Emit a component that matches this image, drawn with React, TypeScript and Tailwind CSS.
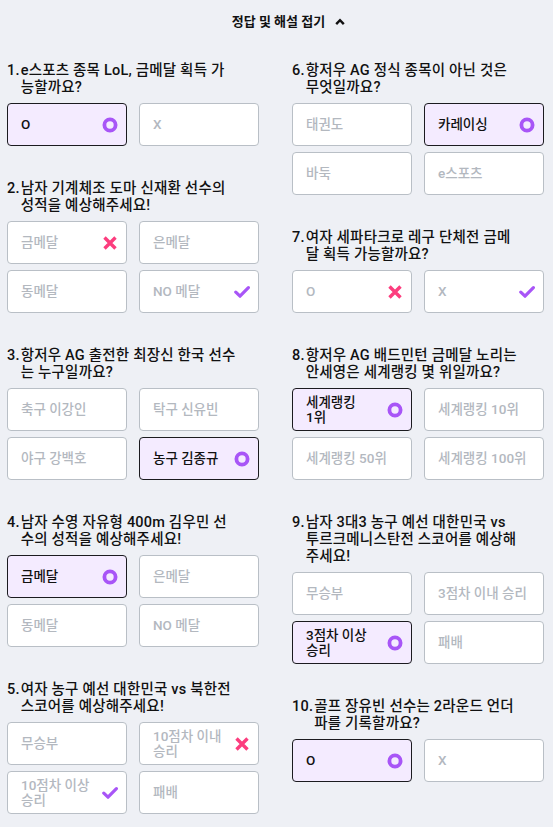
type Mark = "ring" | "x" | "check" | null;

type Option = {
    lines: string[];
    selected?: boolean;
    mark?: Mark;
};

type Question = {
    no: number;
    title: string[];
    options: Option[];
};

const leftQuestions: Question[] = [
    {
        no: 1,
        title: ["e스포츠 종목 LoL, 금메달 획득 가", "능할까요?"],
        options: [{lines: ["O"], selected: true, mark: "ring"}, {lines: ["X"]}],
    },
    {
        no: 2,
        title: ["남자 기계체조 도마 신재환 선수의", "성적을 예상해주세요!"],
        options: [
            {lines: ["금메달"], mark: "x"},
            {lines: ["은메달"]},
            {lines: ["동메달"]},
            {lines: ["NO 메달"], mark: "check"},
        ],
    },
    {
        no: 3,
        title: ["항저우 AG 출전한 최장신 한국 선수", "는 누구일까요?"],
        options: [
            {lines: ["축구 이강인"]},
            {lines: ["탁구 신유빈"]},
            {lines: ["야구 강백호"]},
            {lines: ["농구 김종규"], selected: true, mark: "ring"},
        ],
    },
    {
        no: 4,
        title: ["남자 수영 자유형 400m 김우민 선", "수의 성적을 예상해주세요!"],
        options: [
            {lines: ["금메달"], selected: true, mark: "ring"},
            {lines: ["은메달"]},
            {lines: ["동메달"]},
            {lines: ["NO 메달"]},
        ],
    },
    {
        no: 5,
        title: ["여자 농구 예선 대한민국 vs 북한전", "스코어를 예상해주세요!"],
        options: [
            {lines: ["무승부"]},
            {lines: ["10점차 이내", "승리"], mark: "x"},
            {lines: ["10점차 이상", "승리"], mark: "check"},
            {lines: ["패배"]},
        ],
    },
];

const rightQuestions: Question[] = [
    {
        no: 6,
        title: ["항저우 AG 정식 종목이 아닌 것은", "무엇일까요?"],
        options: [
            {lines: ["태권도"]},
            {lines: ["카레이싱"], selected: true, mark: "ring"},
            {lines: ["바둑"]},
            {lines: ["e스포츠"]},
        ],
    },
    {
        no: 7,
        title: ["여자 세파타크로 레구 단체전 금메", "달 획득 가능할까요?"],
        options: [{lines: ["O"], mark: "x"}, {lines: ["X"], mark: "check"}],
    },
    {
        no: 8,
        title: ["항저우 AG 배드민턴 금메달 노리는", "안세영은 세계랭킹 몇 위일까요?"],
        options: [
            {lines: ["세계랭킹", "1위"], selected: true, mark: "ring"},
            {lines: ["세계랭킹 10위"]},
            {lines: ["세계랭킹 50위"]},
            {lines: ["세계랭킹 100위"]},
        ],
    },
    {
        no: 9,
        title: ["남자 3대3 농구 예선 대한민국 vs", "투르크메니스탄전 스코어를 예상해", "주세요!"],
        options: [
            {lines: ["무승부"]},
            {lines: ["3점차 이내 승리"]},
            {lines: ["3점차 이상", "승리"], selected: true, mark: "ring"},
            {lines: ["패배"]},
        ],
    },
    {
        no: 10,
        title: ["골프 장유빈 선수는 2라운드 언더", "파를 기록할까요?"],
        options: [{lines: ["O"], selected: true, mark: "ring"}, {lines: ["X"]}],
    },
];

const MarkIcon = ({mark}: { mark: Mark }) => {
    if (mark === "ring") {
        return (
            <svg width="16" height="16" viewBox="0 0 16 16">
                <circle cx="8" cy="8" r="5.6" fill="none" stroke="#a855f7" strokeWidth="3.8"/>
            </svg>
        );
    }
    if (mark === "x") {
        return (
            <svg width="16" height="16" viewBox="0 0 16 16">
                <path d="M2.5 2.5 L13.5 13.5 M13.5 2.5 L2.5 13.5" stroke="#fc3d7e" strokeWidth="3.4"/>
            </svg>
        );
    }
    if (mark === "check") {
        return (
            <svg width="16" height="16" viewBox="0 0 16 16">
                <path d="M1.8 8.2 L6 12.2 L14.4 3.6" fill="none" stroke="#a855f7" strokeWidth="3.2"
                      strokeLinecap="round" strokeLinejoin="round"/>
            </svg>
        );
    }
    return null;
};

const OptionBox = ({option}: { option: Option }) => {
    return (
        <div
            className={
                option.selected
                    ? "h-[43px] flex items-center justify-between pl-[13px] pr-[8px] rounded-[4px] border border-[#1b1b1f] bg-[#f4ebff] text-[#111111]"
                    : "h-[43px] flex items-center justify-between pl-[13px] pr-[8px] rounded-[4px] border border-[#b9bfc6] bg-white text-[#b3b8bf]"
            }
        >
            <div className="text-[13.5px] leading-[15px] font-medium">
                {option.lines.map((line) => (
                    <div key={line}>{line}</div>
                ))}
            </div>
            {option.mark && (
                <div className="shrink-0 flex items-center">
                    <MarkIcon mark={option.mark}/>
                </div>
            )}
        </div>
    );
};

const QuestionBlock = ({question}: { question: Question }) => {
    return (
        <div>
            <div className="flex gap-[1px] text-[14.5px] leading-[17px] tracking-[0.2px] font-medium text-[#111111] mb-[7px]">
                <span className="shrink-0">{question.no}.</span>
                <div>
                    {question.title.map((line) => (
                        <div key={line} className="whitespace-nowrap">{line}</div>
                    ))}
                </div>
            </div>
            <div className="grid grid-cols-2 gap-x-[12px] gap-y-[6px]">
                {question.options.map((option) => (
                    <OptionBox key={option.lines.join(" ")} option={option}/>
                ))}
            </div>
        </div>
    );
};

const App = () => {
    return (
        <div
            className="min-h-[827px] w-[553px] bg-[#eef0f5]"
            style={{fontFamily: 'Roboto, "Noto Sans CJK KR", sans-serif'}}
        >
            <div className="h-[44px] flex items-center justify-center pl-[24px] gap-[10px]">
                <span className="text-[13px] font-bold text-[#111111]">정답 및 해설 접기</span>
                <svg width="10" height="8" viewBox="0 0 10 8">
                    <path d="M1.2 6.2 L5 2.2 L8.8 6.2" fill="none" stroke="#111111" strokeWidth="2.4"/>
                </svg>
            </div>
            <div className="flex gap-[33px] pl-[7px] pt-[18px]">
                <div className="w-[252px] flex flex-col gap-[34px]">
                    {leftQuestions.map((q) => (
                        <QuestionBlock key={q.no} question={q}/>
                    ))}
                </div>
                <div className="w-[252px] flex flex-col gap-[34px]">
                    {rightQuestions.map((q) => (
                        <QuestionBlock key={q.no} question={q}/>
                    ))}
                </div>
            </div>
        </div>
    );
};

export default App;
